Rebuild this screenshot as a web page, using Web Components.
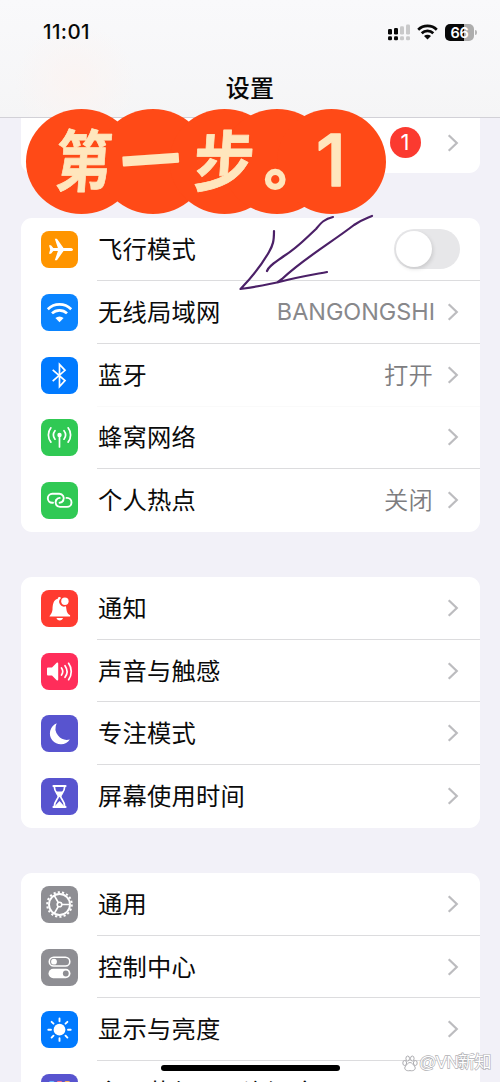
<!DOCTYPE html>
<html lang="zh-CN">
<head>
<meta charset="utf-8">
<title>设置</title>
<style>
html,body{margin:0;padding:0;height:1082px;overflow:hidden;background:#f2f1f8}
body{width:500px;font-family:"Inter","Noto Sans CJK SC",sans-serif}
</style>
</head>
<body>
<settings-screen></settings-screen>
<script>
const ICONS = {
plane:['#ff9500','<path fill="#fff" d="M32 18.500c0-.9-1.200-1.600-2.800-1.600h-6.700L16.300 8.300c-.3-.4-.6-.5-1-.5h-1.500l3.100 9.100h-4.600l-2.300-2.700H8l1.200 4.300L8 22.800h2l2.300-2.700h4.600l-3.100 9.100h1.500c.4 0 .7-.1 1-.5l6.200-8.600h6.700c1.600 0 2.800-.7 2.800-1.600z"/>'],
wifi:['#0a84ff','<g fill="none" stroke="#fff" stroke-width="2.700"><path d="M6.800 15.200a16.800 16.800 0 0 1 23.400 0"/><path d="M11 19.400a10.800 10.800 0 0 1 15 0"/></g><path fill="#fff" d="M18.500 28.300l-4.100-4.200a6 6 0 0 1 8.200 0z"/>'],
bt:['#007aff','<path fill="none" stroke="#fff" stroke-width="1.700" d="M11.700 12.800l12.300 10.800-5.500 6V7.500l5.500 5.800-12.300 10.800"/>'],
cell:['#30c954','<g fill="none" stroke="#fff" stroke-width="1.700" stroke-linecap="round"><path d="M18.500 17v11"/><path d="M14 12.300a7 7 0 0 0 0 8.500M23 12.300a7 7 0 0 1 0 8.500M9.900 9.400a11.500 11.500 0 0 0 0 14.300M27.100 9.400a11.500 11.500 0 0 1 0 14.300" transform="translate(0 -.6)"/></g><circle cx="18.500" cy="16" r="2.200" fill="#fff"/>'],
link:['#30c954','<g fill="none" stroke="#fff" stroke-width="1.900" stroke-linecap="round"><path d="M12 20.800h-.7a4.500 4.500 0 0 1 0-9h7a4.500 4.500 0 0 1 3.900 6.700"/><path d="M25.500 15.900h.5a4.500 4.500 0 0 1 0 9h-7a4.500 4.500 0 0 1-3.900-6.700"/><path d="M22.200 18.500q-1.200 2.300-3.600 2.300M15.100 18.200q1.200-2.300 3.600-2.300"/></g>'],
bell:['#ff3b30','<path fill="#fff" d="M8.500 26.500c.8-2 2.600-3 3-7 .3-5 .7-9.500 5.300-10.700 0-2 2.400-2.300 3.200-.9a4.900 4.900 0 0 0 5 8.300c.5 4 .8 7.300 4.100 9.100v1.200zM15.500 28h6.500c-.6 3.200-6 3.200-6.500 0z"/><circle cx="23.900" cy="11.300" r="3.700" fill="#fff"/>'],
sound:['#ff2d5a','<path fill="#fff" d="M6 15.500q0-1 1-1h4l4.700-4.700c.7-.6 1.500-.2 1.500.7v16c0 .9-.8 1.300-1.500.7L11 22.500H7q-1 0-1-1z"/><g fill="none" stroke="#fff" stroke-width="1.700" stroke-linecap="round"><path d="M20.500 15a6 6 0 0 1 0 7M24 12.700a10 10 0 0 1 0 11.600M27.600 10.300a14 14 0 0 1 0 16.400"/></g>'],
moon:['#5854cf','<path fill="#fff" d="M15.700 8.300a11.500 11.500 0 0 0 13.100 16.200A10.900 10.900 0 1 1 15.700 8.300z"/>'],
hour:['#5854cf','<path fill="none" stroke="#fff" stroke-width="2.200" stroke-linecap="round" d="M12.500 8h12M12.500 29h12"/><path fill="none" stroke="#fff" stroke-width="1.700" d="M13.300 8.500c0 5.500 4 7.500 4 10s-4 4.500-4 10M23.700 8.500c0 5.500-4 7.500-4 10s4 4.500 4 10"/><path fill="#fff" d="M14.500 13.500h8l-4 6zM13.500 28.500l5-5.500 5 5.500z"/>'],
gear:['#8e8e93','<g fill="none" stroke="#fff"><circle cx="18.500" cy="18.500" r="12.300" stroke-width="2" stroke-dasharray="2.150 2.144"/><circle cx="18.500" cy="18.500" r="10.500" stroke-width="1.900"/><circle cx="18.500" cy="18.500" r="2.300" stroke-width="1.600"/><path stroke-width="1.700" d="M21 18.500h8M17.200 16.400l-4-7M17.200 20.600l-4 7"/></g>'],
control:['#8e8e93','<rect x="8.300" y="8.300" width="20.500" height="8.700" rx="4.350" fill="none" stroke="#fff" stroke-width="1.600"/><circle cx="13" cy="12.650" r="2.900" fill="#fff"/><rect x="7.500" y="19.800" width="22" height="9.400" rx="4.700" fill="#fff"/><circle cx="24.800" cy="24.500" r="2.900" fill="#8e8e93"/>'],
sun:['#007aff','<circle cx="18.500" cy="18.700" r="5.900" fill="#fff"/><g stroke="#fff" stroke-width="1.900" stroke-linecap="round"><path d="M18.500 7.500v2.700M18.500 27.200v2.700M7.300 18.700H10M27 18.700h2.700M10.600 10.800l1.900 1.900M24.500 24.700l1.900 1.900M10.600 26.600l1.900-1.900M24.500 12.700l1.900-1.900"/></g>'],
apps:['#5854cf','<g><rect x="8" y="7" width="5.500" height="5.500" rx="1.500" fill="#65b9ff"/><rect x="15.800" y="7" width="5.500" height="5.500" rx="1.500" fill="#ff7a8d"/><rect x="23.500" y="7" width="5.500" height="5.500" rx="1.500" fill="#ffb45b"/></g>']
};
function define(name, render){
  customElements.define(name, class extends HTMLElement{
    connectedCallback(){
      if(this.shadowRoot) return;
      this.attachShadow({mode:'open'}).innerHTML = render(this);
    }
  });
}
define('app-icon', el=>{
  const [bg,art]=ICONS[el.getAttribute('name')];
  return `<style>:host{display:block;width:37px;height:37px;border-radius:8px;background:${bg};flex:none}svg{display:block}</style><svg width="37" height="37" viewBox="0 0 37 37">${art}</svg>`;
});
define('row-chevron', ()=>`<style>:host{display:block;width:12px;height:20px;flex:none}svg{display:block}</style><svg width="12" height="20" viewBox="0 0 12 20"><path d="M1.700 2.200l8.100 7.800-8.100 7.800" fill="none" stroke="#bcbcbf" stroke-width="2.200"/></svg>`);
define('toggle-switch', ()=>`<style>:host{display:flex;box-sizing:border-box;width:66px;height:40px;border-radius:20px;background:#e7e7e9;padding:2px;flex:none}i{display:block;width:36px;height:36px;border-radius:50%;background:#fff;box-shadow:1px 2px 4px #0002}</style><i></i>`);
define('settings-row', el=>{
  const sw=el.hasAttribute('toggle');
  return `<style>
  :host{display:flex;height:62.700px;padding-left:20px;align-items:center;box-sizing:border-box}
  .body{flex:1;display:flex;align-items:center;height:100%;margin-left:19px;padding-right:${sw?20:21}px;box-sizing:border-box;border-bottom:1px solid #dcdcde;font-size:24.300px;letter-spacing:.2px;color:#0b0b0b}
  :host([faint]) .body{border-color:#fafafa}
  :host(:last-child) .body{border-color:transparent}
  .label{flex:1;padding-left:1px;white-space:nowrap;line-height:34px}
  .value{color:#7d7d80;margin-right:14px;white-space:nowrap;font-weight:350;line-height:34px}
  .latin{font:400 23.400px/34px "Inter",sans-serif;color:#88888b;letter-spacing:0;margin-right:12px}
  </style><app-icon name="${el.getAttribute('icon')}"></app-icon><div class="body"><span class="label"><slot></slot></span>${el.getAttribute('value')?`<span class="value ${/^[A-Z]/.test(el.getAttribute('value'))?'latin':''}">${el.getAttribute('value')}</span>`:''}${sw?'<toggle-switch></toggle-switch>':'<row-chevron></row-chevron>'}</div>`;
});
define('settings-group', ()=>`<style>:host{display:block;background:#fff;border-radius:11px;margin:0 20px 45.200px 21px;overflow:hidden;flex:none}</style><slot></slot>`);
define('account-tail', ()=>`<style>:host{display:flex;height:55px;box-sizing:border-box;margin:0 20px 45.450px 21px;padding:0 21px 6px 0;background:#fff;border-radius:0 0 11px 11px;justify-content:flex-end;align-items:center;flex:none}
.badge{width:31px;height:31px;border-radius:50%;background:#fb3a30;color:#fff;font:400 22px/31px "Inter",sans-serif;text-align:center;margin-right:26.500px}</style><span class="badge">1</span><row-chevron></row-chevron>`);
define('status-bar', ()=>`<style>
:host{display:flex;height:64px;align-items:center;padding:0 23px 0 43px;box-sizing:border-box;justify-content:space-between}
.time{font:500 20.500px/24px "Inter",sans-serif;letter-spacing:.4px;color:#080808}
.right{display:flex;align-items:center;gap:7px}
svg{display:block}
.bat{display:flex;align-items:center;gap:1px}
.cell{width:29px;height:17px;border-radius:5px;background:linear-gradient(90deg,#080808 66%,#adadad 66%);color:#fff;font:600 14.500px/17px "Inter",sans-serif;text-align:center;letter-spacing:-.2px}
.tip{width:2px;height:5px;border-radius:0 2px 2px 0;background:#b5b5b5}
</style><span class="time">11:01</span><span class="right">
<svg width="23" height="17" viewBox="0 0 23 17"><g fill="#080808"><rect x="1" y="5" width="4" height="5.500" rx="1.300"/><rect x="1" y="12.300" width="4" height="4" rx="1.300"/><rect x="7" y="4" width="4" height="6.500" rx="1.300"/><rect x="7" y="12.300" width="4" height="4" rx="1.300"/></g><g fill="#c9c9ca"><rect x="13" y="2.300" width="4" height="8.200" rx="1.300"/><rect x="13" y="12.300" width="4" height="4" rx="1.300"/><rect x="19" y="0.500" width="4" height="10" rx="1.300"/><rect x="19" y="12.300" width="4" height="4" rx="1.300"/></g></svg>
<svg width="21" height="16" viewBox="0 0 21 16"><g fill="none" stroke="#080808" stroke-width="2.700"><path d="M1.200 5.700a13.300 13.300 0 0 1 18.600 0"/><path d="M4.700 9.200a8.300 8.300 0 0 1 11.600 0"/></g><path d="M10.500 15.500l-3.500-3.400a5 5 0 0 1 7 0z" fill="#080808"/></svg>
<span class="bat"><span class="cell">66</span><span class="tip"></span></span></span>`);
define('nav-header', ()=>`<style>
:host{display:block;height:118px;box-sizing:border-box;border-bottom:1px solid #d2d1d7;background:radial-gradient(circle at 75px 82px,#fbf4f2 0,#fbf4f200 60px),linear-gradient(#f9f9fb,#f5f5f6);flex:none}
h1{margin:6px 0 0;font:500 24px/34px "Noto Sans CJK SC",sans-serif;text-align:center;letter-spacing:.3px;color:#080808}
</style><status-bar></status-bar><h1>设置</h1>`);
define('step-sticker', ()=>`<style>
:host{position:absolute;left:26px;top:109px;width:360px;height:105px}
svg{display:block;overflow:visible}
text{font-family:"Noto Sans CJK SC",sans-serif;font-weight:700;fill:#ffe6bd;stroke:#ffe6bd;stroke-width:.8;stroke-linejoin:round}
.half{font-feature-settings:"halt";stroke-width:2}
.dash{stroke-width:2}
.num{font-family:"Inter",sans-serif;font-weight:500;stroke-width:1.500}
</style><svg width="360" height="105" viewBox="0 0 360 105"><g fill="#ff4a17"><ellipse cx="55.500" cy="52.500" rx="55.500" ry="52.500"/><ellipse cx="127" cy="52.500" rx="55" ry="52.500"/><ellipse cx="198.500" cy="52.500" rx="55" ry="52.500"/><ellipse cx="251" cy="52.500" rx="55" ry="52.500"/><ellipse cx="305.500" cy="52.500" rx="54.500" ry="52.500"/></g>
<g><text transform="translate(28 77) skewX(-4) scale(.84 1)" font-size="67">第</text><text class="dash" transform="translate(97 76) rotate(-4) scale(.98 1)" font-size="60">一</text><text transform="translate(166 77) skewX(-4) scale(.92 1)" font-size="66">步</text><text class="half" x="238" y="75" font-size="58">。</text><text class="num" x="290" y="77" font-size="72">1</text></g></svg>`);
define('ink-arrow', ()=>`<style>:host{position:absolute;left:235px;top:210px;width:145px;height:85px}svg{display:block}</style><svg width="145" height="85" viewBox="0 0 145 85"><g fill="none" stroke="#4b2067" stroke-width="2.200" stroke-linecap="round" stroke-linejoin="round"><path d="M39 21c0 10-1 14-5 21-8 14-17 25-28.500 37 13-2 27-4 40.500-7.500 15-4 30-6.500 46-9.500"/><path d="M98 7c-9 2-12 6-17 12C66 33 62 38 49 46c-11 8-15 10-17 15"/><path d="M137 6c-7 3-11 4-18 9-22 17-51 34-72 54l-4 3"/></g></svg>`);
define('corner-mark', ()=>`<style>:host{position:absolute;left:402px;top:1052px;display:flex;align-items:center;gap:1px;height:22px;width:97px}
svg{display:block;flex:none}span{font:400 17px/22px "Liberation Sans","Noto Sans CJK SC",sans-serif;color:#fff;-webkit-text-stroke:1.300px #b0b0b4;paint-order:stroke fill;letter-spacing:-.6px;white-space:nowrap}</style>
<svg width="16" height="17" viewBox="0 0 16 17"><g fill="#fff" stroke="#a4a4a8" stroke-width=".9"><ellipse cx="2.700" cy="8" rx="1.900" ry="2.500"/><ellipse cx="5.700" cy="3.500" rx="1.800" ry="2.500"/><ellipse cx="10.300" cy="3.500" rx="1.800" ry="2.500"/><ellipse cx="13.300" cy="8" rx="1.900" ry="2.500"/><path d="M8 7.500c2 0 3 2 4.300 3.400 2.500 3-.3 5.500-4.300 4.700-4 .8-6.800-1.700-4.300-4.700C5 9.500 6 7.500 8 7.500z"/></g></svg><span>@VN新知</span>`);
define('home-indicator', ()=>`<style>:host{position:absolute;left:161px;top:1065px;width:179px;height:6px;border-radius:3px;background:#000}</style>`);
define('settings-screen', ()=>`<style>
:host{display:flex;flex-direction:column;position:relative;width:500px;height:1082px;overflow:hidden;background:#f2f1f8}
</style>
<nav-header></nav-header>
<account-tail></account-tail>
<settings-group><settings-row icon="plane" toggle>飞行模式</settings-row><settings-row icon="wifi" value="BANGONGSHI">无线局域网</settings-row><settings-row icon="bt" value="打开" faint>蓝牙</settings-row><settings-row icon="cell">蜂窝网络</settings-row><settings-row icon="link" value="关闭">个人热点</settings-row></settings-group>
<settings-group><settings-row icon="bell">通知</settings-row><settings-row icon="sound">声音与触感</settings-row><settings-row icon="moon">专注模式</settings-row><settings-row icon="hour">屏幕使用时间</settings-row></settings-group>
<settings-group><settings-row icon="gear">通用</settings-row><settings-row icon="control">控制中心</settings-row><settings-row icon="sun">显示与亮度</settings-row><settings-row icon="apps">主屏幕与App资源库</settings-row></settings-group>
<step-sticker></step-sticker><ink-arrow></ink-arrow><home-indicator></home-indicator><corner-mark></corner-mark>`);
</script>
</body>
</html>
